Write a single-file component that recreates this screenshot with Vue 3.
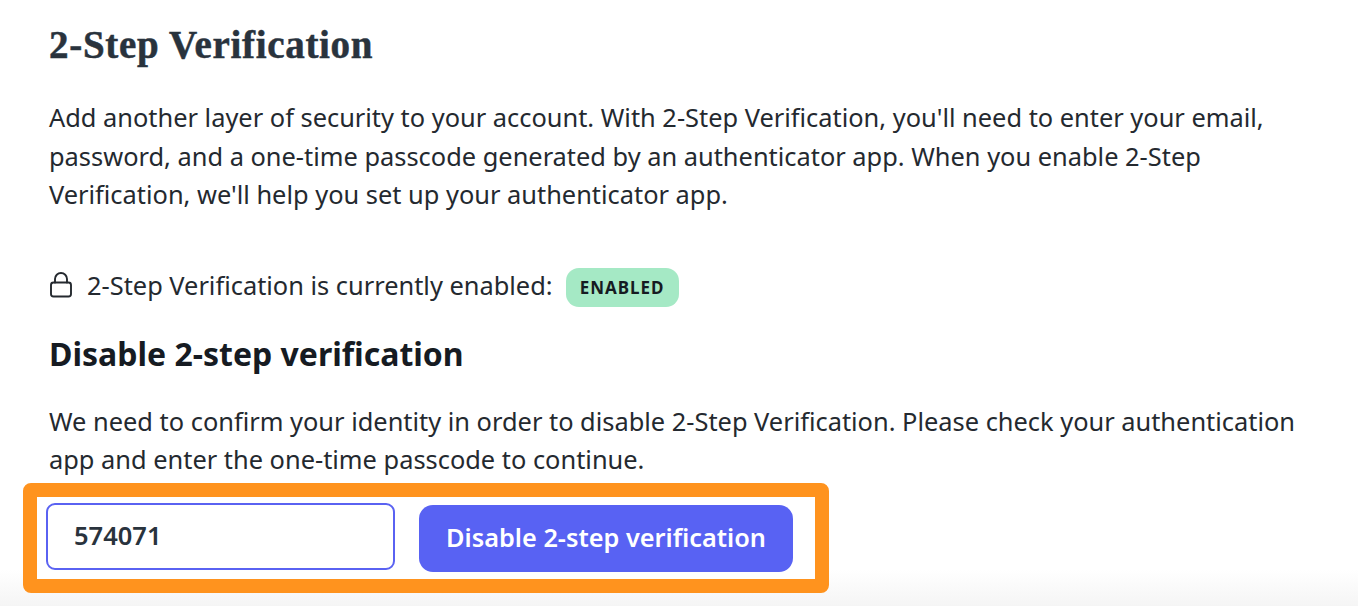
<script setup>
import { ref } from "vue";

const codice = ref("574071");
</script>

<template>
  <div class="page">
    <h1>2-Step Verification</h1>

    <p class="intro">
      Add another layer of security to your account. With 2-Step Verification, you'll need to enter your email,<br />
      password, and a one-time passcode generated by an authenticator app. When you enable 2-Step<br />
      Verification, we'll help you set up your authenticator app.
    </p>

    <div class="status">
      <svg class="lock" viewBox="0 0 24 26" fill="none" stroke="#24292f" stroke-width="1.9" stroke-linecap="round" stroke-linejoin="round">
        <rect x="2" y="10.5" width="20" height="14" rx="2.5" />
        <path d="M6 10.5V7a6 6 0 0 1 12 0v3.5" />
      </svg>
      <span class="status-text">2-Step Verification is currently enabled:</span>
      <span class="badge">ENABLED</span>
    </div>

    <h2>Disable 2-step verification</h2>

    <p class="confirm">
      We need to confirm your identity in order to disable 2-Step Verification. Please check your authentication<br />
      app and enter the one-time passcode to continue.
    </p>

    <div class="highlight">
      <input v-model="codice" type="text" class="code-input" />
      <button class="btn">Disable 2-step verification</button>
    </div>
  </div>
</template>

<style>
html,
body {
  margin: 0;
  background: #fff;
}
</style>

<style scoped>
.page {
  box-sizing: border-box;
  height: 606px;
  overflow: hidden;
  padding: 22px 40px 0 49px;
  font-family: "Noto Sans", sans-serif;
  color: #24292f;
  background: linear-gradient(to bottom, #fff 0, #fff 570px, #f5f5f5 606px);
}

h1 {
  margin: 0;
  font-family: "Liberation Serif", serif;
  font-size: 39px;
  line-height: 46px;
  font-weight: 700;
  letter-spacing: 0.7px;
  color: #29333d;
  -webkit-text-stroke: 0.5px #29333d;
}

.intro,
.confirm {
  margin: 0;
  font-size: 25.4px;
  line-height: 38.5px;
  white-space: nowrap;
}

.intro {
  margin-top: 30px;
}

.status {
  display: flex;
  align-items: center;
  margin-top: 55px;
  height: 38px;
  font-size: 25.4px;
}

.status-text {
  padding-bottom: 6px;
}

.lock {
  width: 24px;
  height: 26px;
  margin: 0 14px 5px 0;
}

.badge {
  margin-left: 13px;
  padding: 0 14px;
  height: 39px;
  line-height: 39px;
  border-radius: 13px;
  background: #a5e9c5;
  color: #161b22;
  font-size: 17px;
  font-weight: 700;
  letter-spacing: 1px;
}

h2 {
  margin: 26px 0 0;
  font-size: 32px;
  line-height: 42px;
  font-weight: 700;
  color: #161b22;
}

.confirm {
  margin-top: 27px;
}

.highlight {
  box-sizing: border-box;
  display: flex;
  align-items: center;
  gap: 24px;
  width: 806px;
  height: 110px;
  margin: 4px 0 0 -26px;
  padding: 0 22px 0 9px;
  border: 14px solid #ff931e;
  border-radius: 8px;
  background: #fff;
}

.code-input {
  box-sizing: border-box;
  width: 349px;
  height: 67px;
  margin-top: -3px;
  padding: 0 26px 2px;
  border: 2.5px solid #5a62f2;
  border-radius: 9px;
  outline: none;
  font-family: "Noto Sans", sans-serif;
  font-size: 25.5px;
  font-weight: 600;
  color: #29333d;
  background: #fff;
}

.btn {
  box-sizing: border-box;
  width: 374px;
  height: 67px;
  margin-top: 2px;
  padding: 0 0 4px;
  border: none;
  border-radius: 14px;
  background: #5862f3;
  color: #fff;
  font-family: "Noto Sans", sans-serif;
  font-size: 25.3px;
  font-weight: 600;
}
</style>
